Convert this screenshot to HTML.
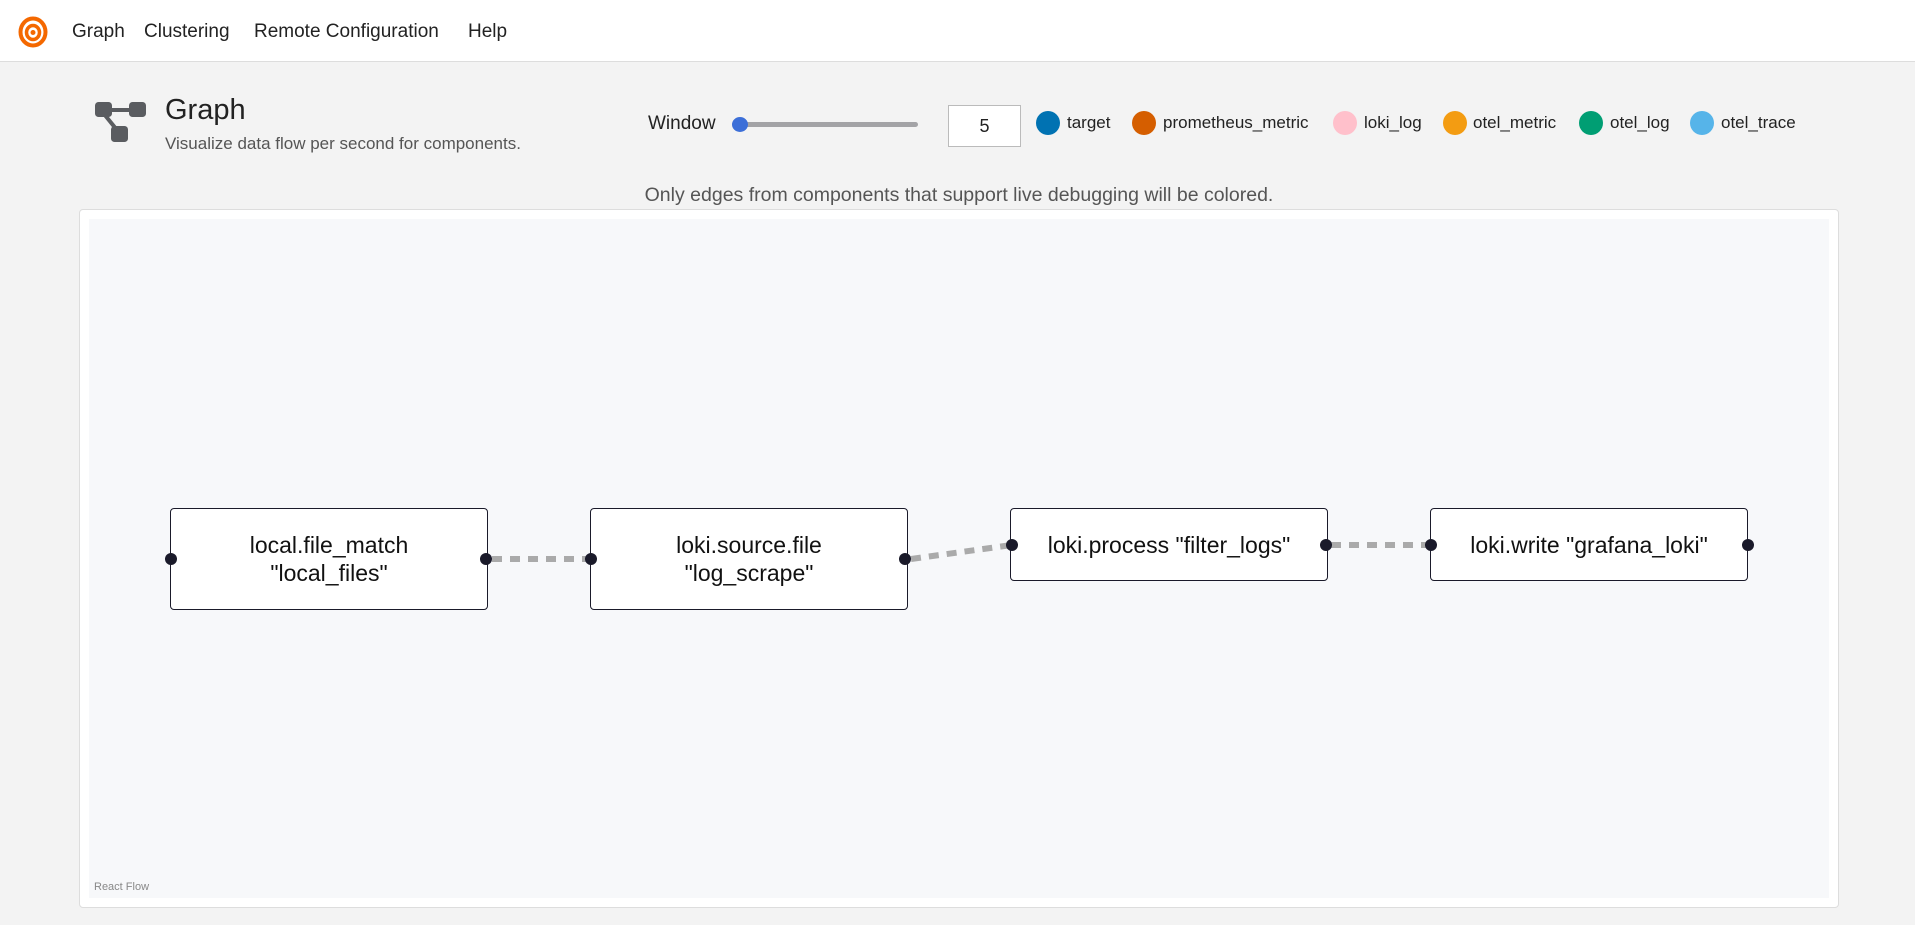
<!DOCTYPE html>
<html><head><meta charset="utf-8"><style>
*{box-sizing:border-box;margin:0;padding:0}
body{width:1915px;height:925px;background:#f3f3f3;font-family:"Liberation Sans",sans-serif;color:#222;position:relative;overflow:hidden}
.nav{position:absolute;left:0;top:0;width:1915px;height:62px;background:#fff;border-bottom:1px solid #ddd}
.nav span{position:absolute;top:21px;font-size:19px;color:#222}
.a{position:absolute;white-space:nowrap}
.dot{position:absolute;width:24px;height:24px;border-radius:50%;top:111px}
.lg{position:absolute;top:113px;font-size:17px;color:#222}
.node{position:absolute;background:#fff;border:1.5px solid #1a1a2a;border-radius:4px;display:flex;align-items:center;justify-content:center;text-align:center;font-size:23px;line-height:28px;color:#111}
.h{position:absolute;width:12px;height:12px;border-radius:50%;background:#1a1a2a}
</style></head><body>
<div class="nav">
<svg style="position:absolute;left:18px;top:16px" width="30" height="32" viewBox="0 0 30 32"><ellipse cx="15" cy="16" rx="12.5" ry="13.5" fill="none" stroke="#f46800" stroke-width="4"/><ellipse cx="15" cy="16.5" rx="6.5" ry="7" fill="none" stroke="#f46800" stroke-width="3.5"/><circle cx="15" cy="16.5" r="2.5" fill="#f46800"/></svg>
<span style="left:72px">Graph</span>
<span style="left:144px">Clustering</span>
<span style="left:254px">Remote Configuration</span>
<span style="left:468px">Help</span>
</div>
<svg style="position:absolute;left:95px;top:100px" width="52" height="44" viewBox="0 0 52 44"><rect x="0" y="2" width="17" height="15" rx="3.5" fill="#5a5c60"/><rect x="34" y="2" width="17" height="15" rx="3.5" fill="#5a5c60"/><rect x="16" y="26" width="17" height="16" rx="3.5" fill="#5a5c60"/><line x1="14" y1="10" x2="36" y2="10" stroke="#5a5c60" stroke-width="4"/><line x1="9" y1="14" x2="22" y2="30" stroke="#5a5c60" stroke-width="4"/></svg>
<div class="a" style="left:165px;top:94px;font-size:29px;color:#222">Graph</div>
<div class="a" style="left:165px;top:134px;font-size:17px;color:#555">Visualize data flow per second for components.</div>
<div class="a" style="left:648px;top:113px;font-size:19px">Window</div>
<div class="a" style="left:732px;top:122px;width:186px;height:5px;background:#a3a3a6;border-radius:3px"></div>
<div class="a" style="left:732px;top:117px;width:16px;height:15px;border-radius:50%;background:#3c6fd8"></div>
<div class="a" style="left:948px;top:105px;width:73px;height:42px;background:#fff;border:1px solid #bbb;font-size:18px;text-align:center;line-height:40px">5</div>
<div class="dot" style="left:1036px;background:#0072b2"></div><div class="lg" style="left:1067px">target</div>
<div class="dot" style="left:1132px;background:#d55e00"></div><div class="lg" style="left:1163px">prometheus_metric</div>
<div class="dot" style="left:1333px;background:#ffc0cb"></div><div class="lg" style="left:1364px">loki_log</div>
<div class="dot" style="left:1443px;background:#f39c12"></div><div class="lg" style="left:1473px">otel_metric</div>
<div class="dot" style="left:1579px;background:#009e73"></div><div class="lg" style="left:1610px">otel_log</div>
<div class="dot" style="left:1690px;background:#56b4e9"></div><div class="lg" style="left:1721px">otel_trace</div>
<div class="a" style="left:0;width:1918px;text-align:center;top:184px;font-size:19.5px;color:#555">Only edges from components that support live debugging will be colored.</div>
<div class="a" style="left:79px;top:209px;width:1760px;height:699px;background:#fff;border:1px solid #ddd;border-radius:4px"></div>
<div class="a" style="left:89px;top:219px;width:1740px;height:679px;background:#f7f8fa"></div>
<div class="a" style="left:94px;top:881px;font-size:11px;color:#888">React Flow</div>
<svg class="a" style="left:0;top:0" width="1915" height="925"><g stroke="#aaa" stroke-width="6" stroke-dasharray="10 8" fill="none"><line x1="492" y1="559" x2="590" y2="559"/><path d="M911 559 L1012 545"/><line x1="1331" y1="545" x2="1430" y2="545"/></g></svg>
<div class="node" style="left:170px;top:508px;width:318px;height:102px">local.file_match<br>"local_files"</div>
<div class="node" style="left:590px;top:508px;width:318px;height:102px">loki.source.file<br>"log_scrape"</div>
<div class="node" style="left:1010px;top:508px;width:318px;height:73px">loki.process "filter_logs"</div>
<div class="node" style="left:1430px;top:508px;width:318px;height:73px">loki.write "grafana_loki"</div>
<div class="h" style="left:165px;top:553px"></div><div class="h" style="left:480px;top:553px"></div>
<div class="h" style="left:585px;top:553px"></div><div class="h" style="left:899px;top:553px"></div>
<div class="h" style="left:1006px;top:539px"></div><div class="h" style="left:1320px;top:539px"></div>
<div class="h" style="left:1425px;top:539px"></div><div class="h" style="left:1742px;top:539px"></div>
</body></html>
